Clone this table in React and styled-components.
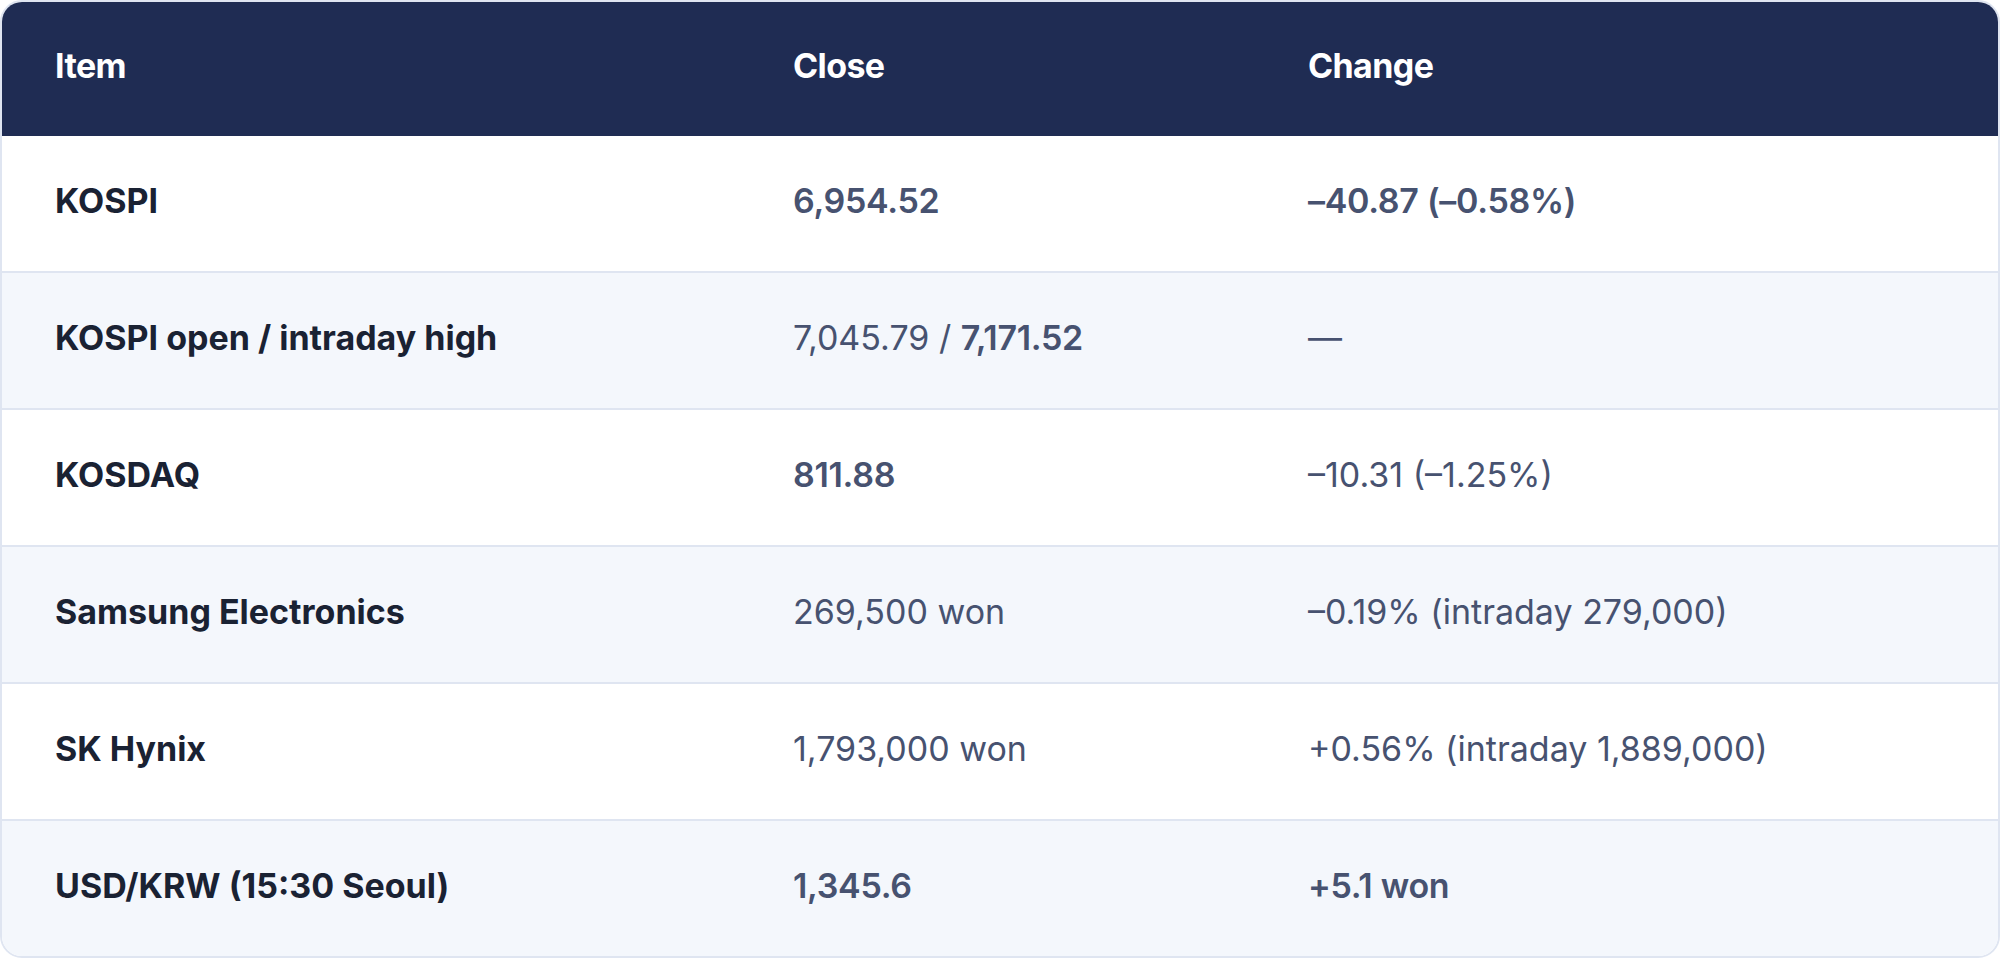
import React from 'react';
import styled, { createGlobalStyle } from 'styled-components';

const rows = [
  { item: 'KOSPI', close: [{ text: '6,954.52', strong: true }], change: [{ text: '–40.87 (–0.58%)', strong: true }] },
  {
    item: 'KOSPI open / intraday high',
    close: [{ text: '7,045.79 / ' }, { text: '7,171.52', strong: true }],
    change: [{ text: '—' }],
  },
  { item: 'KOSDAQ', close: [{ text: '811.88', strong: true }], change: [{ text: '–10.31 (–1.25%)' }] },
  { item: 'Samsung Electronics', close: [{ text: '269,500 won' }], change: [{ text: '–0.19% (intraday 279,000)' }] },
  { item: 'SK Hynix', close: [{ text: '1,793,000 won' }], change: [{ text: '+0.56% (intraday 1,889,000)' }] },
  { item: 'USD/KRW (15:30 Seoul)', close: [{ text: '1,345.6', strong: true }], change: [{ text: '+5.1 won', strong: true }] },
];

const renderParts = (parts) =>
  parts.map((p, i) => (p.strong ? <Strong key={i}>{p.text}</Strong> : <span key={i}>{p.text}</span>));

const App = () => {
  return (
    <>
      <GlobalStyle />
      <Card>
        <HeaderRow>
          <HeadCell $first>Item</HeadCell>
          <HeadCell>Close</HeadCell>
          <HeadCell>Change</HeadCell>
        </HeaderRow>
        {rows.map((row, i) => (
          <Row key={row.item} $striped={i % 2 === 1} $first={i === 0}>
            <ItemCell $first>{row.item}</ItemCell>
            <ValueCell>{renderParts(row.close)}</ValueCell>
            <ValueCell>{renderParts(row.change)}</ValueCell>
          </Row>
        ))}
      </Card>
    </>
  );
};

export default App;

const GlobalStyle = createGlobalStyle`
  html, body {
    margin: 0;
    padding: 0;
    background: #ffffff;
  }
  body {
    font-family: Inter, "Noto Sans CJK KR", sans-serif;
  }
`;

const Card = styled.div`
  border: 2px solid #dfe5f1;
  border-radius: 22px;
  overflow: hidden;
  background: #ffffff;
`;

const Grid = styled.div`
  display: grid;
  grid-template-columns: 737px 515px 1fr;
  align-items: center;
`;

const Cell = styled.div`
  padding: 0 0 6px ${(p) => (p.$first ? '53px' : '54px')};
  font-size: 34px;
  line-height: 1.4;
`;

const HeaderRow = styled(Grid)`
  height: 134px;
  background: #1f2c53;
`;

const HeadCell = styled(Cell)`
  color: #ffffff;
  font-weight: 700;
  letter-spacing: -0.6px;
`;

const Row = styled(Grid)`
  height: 135px;
  background: ${(p) => (p.$striped ? '#f4f7fc' : '#ffffff')};
  border-top: ${(p) => (p.$first ? 'none' : '2px solid #dfe5f1')};
`;

const ItemCell = styled(Cell)`
  color: #1a2233;
  font-weight: 700;
`;

const ValueCell = styled(Cell)`
  color: #475270;
  font-weight: 400;
`;

const Strong = styled.span`
  font-weight: 600;
  letter-spacing: -0.3px;
`;
